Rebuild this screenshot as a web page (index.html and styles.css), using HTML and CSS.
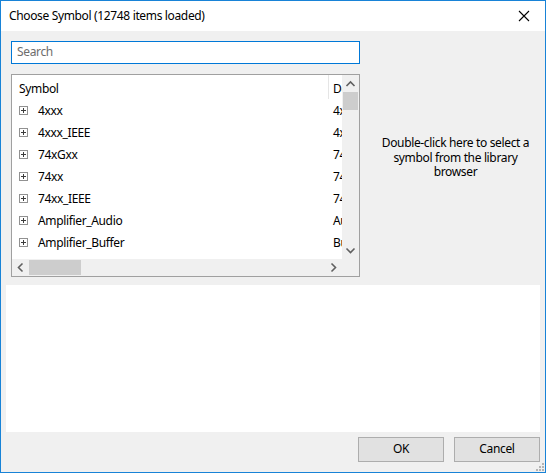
FILE: index.html
```html
<!DOCTYPE html>
<html>
<head>
<meta charset="utf-8">
<link rel="stylesheet" href="styles.css">
</head>
<body>
<div class="window">
  <div class="titlebar">
    <span class="title">Choose Symbol (12748 items loaded)</span>
    <svg class="close" width="12" height="12" viewBox="0 0 12 12"><path d="M1 1L11 11M11 1L1 11" stroke="#000" stroke-width="1.1" fill="none"/></svg>
  </div>
  <div class="content">
    <div class="top">
      <div class="leftcol">
        <div class="search">Search</div>
        <div class="tree">
          <div class="treemain">
            <div class="rows">
              <div class="header"><span class="c1">Symbol</span><span class="sep"></span><span class="c2">Description</span></div>
              <div class="row"><span class="exp"></span><span class="c1n">4xxx</span><span class="c2">4xxx series</span></div>
              <div class="row"><span class="exp"></span><span class="c1n">4xxx_IEEE</span><span class="c2">4xxx series</span></div>
              <div class="row"><span class="exp"></span><span class="c1n">74xGxx</span><span class="c2">74xGxx</span></div>
              <div class="row"><span class="exp"></span><span class="c1n">74xx</span><span class="c2">74xx series</span></div>
              <div class="row"><span class="exp"></span><span class="c1n">74xx_IEEE</span><span class="c2">74xx series</span></div>
              <div class="row"><span class="exp"></span><span class="c1n">Amplifier_Audio</span><span class="c2">Audio</span></div>
              <div class="row"><span class="exp"></span><span class="c1n">Amplifier_Buffer</span><span class="c2">Buffer</span></div>
            </div>
            <div class="vscroll">
              <svg class="arr" width="17" height="17" viewBox="0 0 17 17"><path d="M4.5 11L8.5 7L12.5 11" stroke="#606060" stroke-width="1.6" fill="none"/></svg>
              <div class="vthumb"></div>
              <div class="vspace"></div>
              <svg class="arr" width="17" height="17" viewBox="0 0 17 17"><path d="M4.5 6.5L8.5 10.5L12.5 6.5" stroke="#606060" stroke-width="1.6" fill="none"/></svg>
            </div>
          </div>
          <div class="hbar">
            <div class="hscroll">
              <svg class="arr" width="17" height="17" viewBox="0 0 17 17"><path d="M10.5 4.5L6.5 8.5L10.5 12.5" stroke="#606060" stroke-width="1.6" fill="none"/></svg>
              <div class="hthumb"></div>
              <div class="hspace"></div>
              <svg class="arr" width="17" height="17" viewBox="0 0 17 17"><path d="M6.5 4.5L10.5 8.5L6.5 12.5" stroke="#606060" stroke-width="1.6" fill="none"/></svg>
            </div>
            <div class="corner"></div>
          </div>
        </div>
      </div>
      <div class="preview">Double-click here to select a symbol from the library browser</div>
    </div>
    <div class="details"></div>
    <div class="buttons">
      <div class="btn">OK</div>
      <div class="btn">Cancel</div>
    </div>
    <svg class="grip" width="8" height="8" viewBox="0 0 8 8" fill="#b4b4b4"><rect x="6" y="0" width="2" height="2"/><rect x="3" y="3" width="2" height="2"/><rect x="6" y="3" width="2" height="2"/><rect x="0" y="6" width="2" height="2"/><rect x="3" y="6" width="2" height="2"/><rect x="6" y="6" width="2" height="2"/></svg>
  </div>
</div>
</body>
</html>
```

FILE: styles.css
```css
html, body {
  margin: 0;
  padding: 0;
  background: #f0f0f0;
}
body {
  font-family: "Noto Sans", "Open Sans", "Liberation Sans", sans-serif;
  font-size: 12px;
  letter-spacing: -0.35px;
  color: #000;
}
.window {
  width: 546px;
  height: 473px;
  box-sizing: border-box;
  border: 1px solid #1883d7;
  display: flex;
  flex-direction: column;
  background: #f0f0f0;
}
.titlebar {
  height: 30px;
  background: #fff;
  display: flex;
  align-items: center;
  justify-content: space-between;
  padding: 0 15px 0 8px;
  flex: none;
}
.title {
  font-size: 12px;
  padding-bottom: 1px;
}
.close {
  display: block;
}
.content {
  flex: 1;
  position: relative;
  display: flex;
  flex-direction: column;
}
.top {
  display: flex;
  padding: 10px 0 0 10px;
  height: 246px;
  box-sizing: border-box;
  flex: none;
}
.leftcol {
  width: 349px;
  display: flex;
  flex-direction: column;
  gap: 10px;
  flex: none;
}
.search {
  height: 23px;
  box-sizing: border-box;
  border: 1px solid #0078d7;
  background: #fff;
  color: #6d6d6d;
  padding: 0 0 0 5px;
  line-height: 20px;
}
.tree {
  height: 203px;
  box-sizing: border-box;
  border: 1px solid #a0a0a0;
  background: #fff;
  display: flex;
  flex-direction: column;
}
.treemain {
  flex: 1;
  display: flex;
  min-height: 0;
}
.rows {
  flex: 1;
  overflow: hidden;
  white-space: nowrap;
}
.header {
  height: 24px;
  box-sizing: border-box;
  padding-top: 2px;
  display: flex;
  align-items: center;
}
.header .c1 {
  padding-left: 7px;
  width: 309px;
  flex: none;
}
.sep {
  width: 1px;
  height: 24px;
  margin-top: -2px;
  background: #e5e5e5;
  margin-right: 4px;
  flex: none;
}
.row {
  height: 22px;
  box-sizing: border-box;
  padding-top: 1px;
  display: flex;
  align-items: center;
}
.exp {
  width: 9px;
  height: 9px;
  box-sizing: border-box;
  border: 1px solid #919191;
  margin-left: 7px;
  margin-right: 10px;
  position: relative;
  flex: none;
}
.exp::before {
  content: "";
  position: absolute;
  left: 1px;
  top: 3px;
  width: 5px;
  height: 1px;
  background: #3c3c3c;
}
.exp::after {
  content: "";
  position: absolute;
  left: 3px;
  top: 1px;
  width: 1px;
  height: 5px;
  background: #3c3c3c;
}
.c1n {
  width: 295px;
  flex: none;
}
.c2 {
  flex: none;
}
.vscroll {
  width: 17px;
  background: #f0f0f0;
  display: flex;
  flex-direction: column;
  flex: none;
}
.arr {
  display: block;
  flex: none;
}
.vthumb {
  height: 18px;
  margin: 0 1px;
  background: #cdcdcd;
  flex: none;
}
.vspace {
  flex: 1;
}
.hbar {
  height: 17px;
  display: flex;
  flex: none;
}
.hscroll {
  flex: 1;
  display: flex;
  background: #f0f0f0;
}
.hthumb {
  width: 52px;
  margin: 1px 0;
  background: #cdcdcd;
  flex: none;
}
.hspace {
  flex: 1;
}
.corner {
  width: 17px;
  background: #f0f0f0;
}
.preview {
  flex: 1;
  text-align: center;
  padding: 0 8px 0 14px;
  margin-top: 95px;
  line-height: 14.5px;
}
.details {
  margin: 8px 5px 0 5px;
  height: 147px;
  background: #fff;
  flex: none;
}
.buttons {
  display: flex;
  justify-content: flex-end;
  gap: 10px;
  padding: 5px 5px 0 0;
}
.btn {
  width: 86px;
  height: 25px;
  box-sizing: border-box;
  border: 1px solid #adadad;
  background: #e1e1e1;
  text-align: center;
  line-height: 22px;
}
.grip {
  position: absolute;
  right: 1px;
  bottom: 1px;
}
```
